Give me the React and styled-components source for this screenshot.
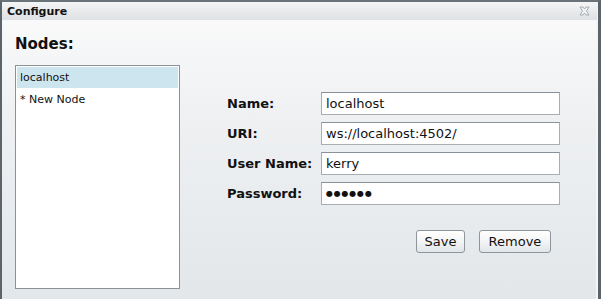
import React from "react";
import styled, { createGlobalStyle } from "styled-components";

const Global = createGlobalStyle`
  html, body { margin: 0; padding: 0; background: #ffffff; }
  body { font-family: "DejaVu Sans", Verdana, sans-serif; }
`;

const Window = styled.div`
  box-sizing: border-box;
  width: 601px;
  height: 299px;
  border-left: 2px solid #5c646a;
  border-top: 2px solid #6b7379;
  border-right: 3px solid #5c646a;
  display: flex;
  flex-direction: column;
  background: linear-gradient(to bottom, #fbfbfb 0%, #eef0f2 40%, #e3e7ea 100%);
  overflow: hidden;
`;

const TitleBar = styled.div`
  height: 18px;
  flex: 0 0 18px;
  display: flex;
  align-items: center;
  justify-content: space-between;
  padding: 0 8px 0 5px;
  background: linear-gradient(to bottom, #f4f5f6 0%, #e6e8ea 60%, #dfe2e5 100%);
  border-bottom: 1px solid #f8f9fa;
  box-shadow: inset -1px 0 0 #f2f3f4;
`;

const Title = styled.span`
  font-size: 11px;
  font-weight: bold;
  color: #111;
`;

const CloseIcon = styled.svg`
  width: 11px;
  height: 10px;
  display: block;
`;

const Body = styled.div`
  flex: 1;
  display: flex;
  flex-direction: column;
  padding: 13px 0 0 13px;
  box-shadow: inset -2px 0 0 #f4f5f6;
`;

const Heading = styled.div`
  font-size: 15px;
  font-weight: bold;
  color: #111;
  line-height: 20px;
  margin-bottom: 11px;
`;

const Content = styled.div`
  display: flex;
  align-items: flex-start;
`;

const ListBox = styled.div`
  box-sizing: border-box;
  width: 165px;
  height: 224px;
  background: #ffffff;
  border: 1px solid #8a9298;
  padding: 1px;
  display: flex;
  flex-direction: column;
`;

const ListItem = styled.div`
  height: 21px;
  line-height: 21px;
  padding-left: 3px;
  font-size: 11px;
  color: #111;
  background: ${(p) => (p.$selected ? "#cde5ef" : "transparent")};
  margin-bottom: ${(p) => (p.$selected ? "1px" : "0")};
`;

const Form = styled.div`
  margin-left: 47px;
  padding-top: 27px;
  display: flex;
  flex-direction: column;
`;

const Row = styled.div`
  display: flex;
  align-items: center;
  height: 23px;
  margin-bottom: 7px;
`;

const Label = styled.div`
  width: 94px;
  font-size: 13px;
  font-weight: bold;
  color: #111;
`;

const Input = styled.div`
  box-sizing: border-box;
  width: 239px;
  height: 23px;
  background: #ffffff;
  border: 1px solid #a6aeb4;
  border-top-color: #8a9298;
  display: flex;
  align-items: center;
  padding-left: 4px;
  font-size: 13px;
  color: #111;
`;

const Dots = styled.span`
  font-size: 8px;
  letter-spacing: 0.8px;
  color: #111;
`;

const Buttons = styled.div`
  display: flex;
  gap: 14px;
  margin-top: 18px;
  padding-left: 189px;
`;

const Button = styled.div`
  box-sizing: border-box;
  height: 23px;
  width: ${(p) => p.$w}px;
  display: flex;
  align-items: center;
  justify-content: center;
  font-size: 13px;
  color: #111;
  border: 1px solid #8e969c;
  border-radius: 3px;
  background: linear-gradient(to bottom, #ffffff 0%, #f3f4f5 50%, #e2e5e8 100%);
`;

export default function App() {
  return (
    <>
      <Global />
      <Window>
        <TitleBar>
          <Title>Configure</Title>
          <CloseIcon viewBox="0 0 11 10">
            <path
              d="M1 1 L4 1 L5.5 3 L7 1 L10 1 L7.5 5 L10 9 L7 9 L5.5 7 L4 9 L1 9 L3.5 5 Z"
              fill="#f2f3f4"
              stroke="#a0a6ab"
              strokeWidth="0.9"
              strokeLinejoin="round"
            />
          </CloseIcon>
        </TitleBar>
        <Body>
          <Heading>Nodes:</Heading>
          <Content>
            <ListBox>
              <ListItem $selected>localhost</ListItem>
              <ListItem>* New Node</ListItem>
            </ListBox>
            <Form>
              <Row>
                <Label>Name:</Label>
                <Input>localhost</Input>
              </Row>
              <Row>
                <Label>URI:</Label>
                <Input>ws://localhost:4502/</Input>
              </Row>
              <Row>
                <Label>User Name:</Label>
                <Input>kerry</Input>
              </Row>
              <Row>
                <Label>Password:</Label>
                <Input>
                  <Dots>●●●●●●</Dots>
                </Input>
              </Row>
              <Buttons>
                <Button $w={49}>Save</Button>
                <Button $w={72}>Remove</Button>
              </Buttons>
            </Form>
          </Content>
        </Body>
      </Window>
    </>
  );
}
